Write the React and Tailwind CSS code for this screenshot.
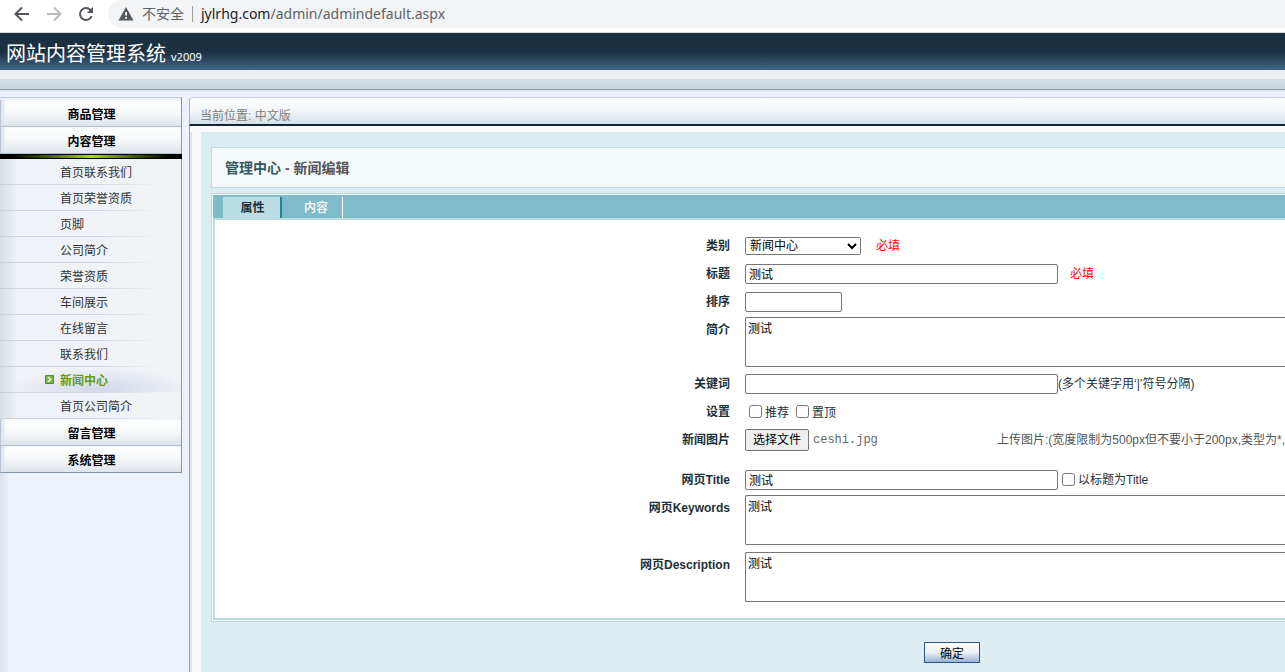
import React from "react";

const pages = [
  "首页联系我们",
  "首页荣誉资质",
  "页脚",
  "公司简介",
  "荣誉资质",
  "车间展示",
  "在线留言",
  "联系我们",
  "新闻中心",
  "首页公司简介",
];

const field = "rounded-xs border border-[#767676] bg-white px-[3px] text-black outline-none";

function BrowserBar() {
  return (
    <div className="flex h-[33px] items-start border-b border-[#d5d7d9] bg-white font-['Noto_Sans','Noto_Sans_CJK_SC',sans-serif] text-sm">
      <div className="flex h-7 items-center gap-3 pl-3">
        <button type="button" aria-label="后退" className="text-[#54575b]">
          <svg width="20" height="20" viewBox="0 0 20 20" fill="none" stroke="currentColor" strokeWidth="2">
            <path d="M17 10H4M10 3.5L3.5 10L10 16.5" />
          </svg>
        </button>
        <button type="button" aria-label="前进" className="text-[#b9bbbd]">
          <svg width="20" height="20" viewBox="0 0 20 20" fill="none" stroke="currentColor" strokeWidth="2">
            <path d="M3 10H16M10 3.5L16.5 10L10 16.5" />
          </svg>
        </button>
        <button type="button" aria-label="刷新" className="text-[#54575b]">
          <svg width="20" height="20" viewBox="0 0 20 20" fill="none" stroke="currentColor" strokeWidth="2">
            <path d="M15.6 12.2A6 6 0 1 1 14.4 5.9L15.8 7.4" />
            <path d="M17 2.8V9H10.8Z" fill="currentColor" stroke="none" />
          </svg>
        </button>
      </div>
      <div className="ml-3 flex h-7 min-w-0 flex-1 items-center rounded-l-full bg-[#f1f3f4] pl-[10px] text-[#5f6368]">
        <svg width="16" height="16" viewBox="0 0 16 16" className="mr-2 shrink-0">
          <path d="M8 1L15.5 14.5H0.5Z" fill="#55585c" />
          <path d="M7.2 6h1.8v3.6H7.2zM7.2 11h1.8v1.8H7.2z" fill="#fff" />
        </svg>
        <span className="whitespace-nowrap">不安全</span>
        <span className="mx-2 h-4 w-px bg-[#9aa0a6]" />
        <span className="whitespace-nowrap">
          <span className="text-[#202124]">jylrhg.com</span>/admin/admindefault.aspx
        </span>
      </div>
    </div>
  );
}

function MenuHeading({ children, last }) {
  return (
    <a
      href="#"
      className={
        "flex h-[27px] items-center justify-center border-b border-l border-l-[#b9c5d3] bg-linear-to-b from-white via-[#f6f8f9] to-[#dfe4ec] pt-1 pl-px font-bold text-black shadow-[inset_3px_0_3px_#dfe4ec] " +
        (last ? "border-b-[#8293a6]" : "border-b-[#b3c0ce]")
      }
    >
      {children}
    </a>
  );
}

function Sidebar() {
  return (
    <div className="w-[190px] shrink-0 bg-linear-to-r from-[#dde1ec] via-[#edf1fb] via-5% to-[#edf1fb] pr-2">
      <nav className="border-t border-r border-t-[#c0cbd8] border-r-[#8796a8] bg-[#eef2f6] pt-0.5">
        <MenuHeading>商品管理</MenuHeading>
        <MenuHeading>内容管理</MenuHeading>
        <div className="-mr-px h-[5px] border-y border-black bg-linear-to-r from-black via-[#a8e000] to-black" />
        <ul className="bg-linear-to-r from-[#d9dfe7] via-[#eff2f6] via-10% to-[#eff3f6]">
          {pages.map((page) => {
            const active = page === "新闻中心";
            return (
              <li key={page}>
                <a
                  href="#"
                  className={
                    "flex h-[25px] items-center pl-[45px] " +
                    (active
                      ? "bg-[radial-gradient(ellipse_90px_22px_at_55%_90%,#d3d8e7,transparent)] font-bold text-[#6a9a16]"
                      : "text-[#333]")
                  }
                >
                  <span className="w-[15px] shrink-0">
                    {active && (
                      <svg width="9" height="9" viewBox="0 0 9 9">
                        <rect width="9" height="9" rx="1" fill="#4b9227" />
                        <rect x="1" y="1" width="7" height="7" fill="#78b545" />
                        <path d="M3 2L5.7 4.5L3 7" fill="none" stroke="#fff" strokeWidth="1.5" />
                      </svg>
                    )}
                  </span>
                  <span className="pt-0.5">{page}</span>
                </a>
                <div className="h-px bg-linear-to-r from-[#cdd4de] via-[#cdd4de] to-transparent to-90%" />
              </li>
            );
          })}
        </ul>
        <MenuHeading>留言管理</MenuHeading>
        <MenuHeading last>系统管理</MenuHeading>
      </nav>
    </div>
  );
}

function Row({ label, id, height = "h-7", top, children }) {
  return (
    <div className={"flex items-start gap-[15px] " + height}>
      <label htmlFor={id} className="w-[515px] shrink-0 text-right leading-[30px] font-bold">
        {label}
      </label>
      <div className={"flex min-w-0 flex-1 " + (top ? "items-start pt-0.5" : "h-[29px] items-center")}>{children}</div>
    </div>
  );
}

function Area({ id }) {
  return (
    <textarea
      id={id}
      defaultValue="测试"
      className="h-[50px] w-full resize-none rounded-l-xs border border-r-0 border-[#767676] bg-white px-0.5 pt-[3px] leading-4 text-black outline-none"
    />
  );
}

function NewsForm() {
  return (
    <form className="pt-[11px] pb-[14px]">
      <Row label="类别" id="category">
        <select id="category" className="h-[18px] w-[116px] rounded-xs border border-[#767676] bg-white leading-3 text-black">
          <option>新闻中心</option>
        </select>
        <span className="ml-[15px] text-[#f00]">必填</span>
      </Row>
      <Row label="标题" id="title">
        <input id="title" defaultValue="测试" className={field + " h-5 w-[313px]"} />
        <span className="ml-3 text-[#f00]">必填</span>
      </Row>
      <Row label="排序" id="order">
        <input id="order" className={field + " h-5 w-[97px]"} />
      </Row>
      <Row label="简介" id="summary" height="h-[54px]" top>
        <Area id="summary" />
      </Row>
      <Row label="关键词" id="keyword">
        <input id="keyword" className={field + " h-5 w-[313px]"} />
        <label htmlFor="keyword" className="whitespace-nowrap">(多个关键字用‘|’符号分隔)</label>
      </Row>
      <Row label="设置" id="recommend">
        <div className="flex items-center pl-1">
          <input id="recommend" type="checkbox" className="size-[13px]" />
          <label htmlFor="recommend" className="mr-[7px] ml-[3px] pt-0.5">推荐</label>
          <input id="top" type="checkbox" className="size-[13px]" />
          <label htmlFor="top" className="ml-[3px] pt-0.5">置顶</label>
        </div>
      </Row>
      <Row label="新闻图片" id="picture" height="h-10">
        <button id="picture" type="button" className="h-[22px] w-16 shrink-0 rounded-xs border border-[#767676] bg-[#efefef] text-black">
          选择文件
        </button>
        <span className="ml-1 w-[184px] shrink-0 font-['Liberation_Mono',monospace] text-[#666]">ceshi.jpg</span>
        <span className="overflow-hidden whitespace-nowrap text-[#555]">上传图片:(宽度限制为500px但不要小于200px,类型为*,</span>
      </Row>
      <Row label="网页Title" id="page-title">
        <input id="page-title" defaultValue="测试" className={field + " h-5 w-[313px]"} />
        <input id="same-title" type="checkbox" className="ml-1 size-[13px]" />
        <label htmlFor="same-title" className="ml-[3px]">以标题为Title</label>
      </Row>
      <Row label="网页Keywords" id="page-keywords" height="h-[57px]" top>
        <Area id="page-keywords" />
      </Row>
      <Row label="网页Description" id="page-description" height="h-[54px]" top>
        <Area id="page-description" />
      </Row>
    </form>
  );
}

export default function App() {
  return (
    <div className="flex min-h-screen flex-col overflow-hidden bg-[#edf1fc] font-['Liberation_Sans','Noto_Sans_CJK_SC',sans-serif] text-xs text-[#1d3138]">
      <BrowserBar />
      <header>
        <div className="flex h-[37px] items-center bg-linear-to-b from-[#1b3041] from-50% to-[#42658a] pt-1 pl-1.5 font-['Noto_Sans','Noto_Sans_CJK_SC',sans-serif] text-white">
          <h1 className="flex items-baseline gap-[5px] whitespace-nowrap">
            <span className="text-xl leading-7">网站内容管理系统</span>
            <span className="text-[11px]">v2009</span>
          </h1>
        </div>
        <div className="h-[9px] bg-[#eceef2]" />
        <div className="h-[11px] border-b border-[#8e9daf] bg-linear-to-b from-[#d9deea] to-[#cad5dc]" />
        <div className="h-px bg-[#d7ddea]" />
      </header>
      <div className="flex flex-1 pt-1.5">
        <Sidebar />
        <main className="flex min-w-0 flex-1 flex-col">
          <div className="-ml-px flex h-[29px] items-center rounded-tl-sm border-t border-b-2 border-l border-t-[#cbd3e0] border-b-[#122631] border-l-[#a9b5c4] bg-linear-to-b from-white via-[#f3f5f8] to-[#d3e0e8] pt-[10px] pl-[10px] text-[#808080]">
            当前位置: 中文版
          </div>
          <div className="-ml-px flex flex-1 border-l border-[#98a5b5] bg-[#f9f9f9] pt-1.5">
            <div className="w-0.5 shrink-0 bg-[#dde2ee]" />
            <section className="ml-[9px] min-w-0 flex-1 bg-[#dcedf1] pt-[15px] pl-[10px]">
              <h2 className="flex h-[41px] items-center border border-r-0 border-[#bbdce5] bg-[#f4f9fc] pl-[13px] text-sm font-bold text-[#335860]">
                管理中心&nbsp;<span className="text-[#555]">- 新闻编辑</span>
              </h2>
              <div className="mt-[5px] border border-r-0 border-[#bbdce5] bg-[#f4f9fc] py-px pl-px">
                <div className="flex h-[25px] border-b-2 border-[#b9dde5] bg-[#80bbc9] pt-0.5 pl-[10px]">
                  <button type="button" className="w-[59px] border-r-2 border-[#23828f] bg-[#b9dde5] pt-px pl-0.5 font-bold text-[#1d3138]">
                    属性
                  </button>
                  <button type="button" className="w-[61px] border-r border-white pt-px pl-2 font-medium text-white">
                    内容
                  </button>
                </div>
                <div className="border-b-2 border-l-2 border-[#b9dde5] bg-white">
                  <NewsForm />
                </div>
              </div>
              <button
                type="button"
                className="mt-5 ml-[713px] block h-[21px] w-14 border border-[#2c5590] bg-linear-to-b from-white via-[#edf1f7] to-[#9bb2d2] pt-0.5 text-black"
              >
                确定
              </button>
            </section>
          </div>
        </main>
      </div>
    </div>
  );
}
